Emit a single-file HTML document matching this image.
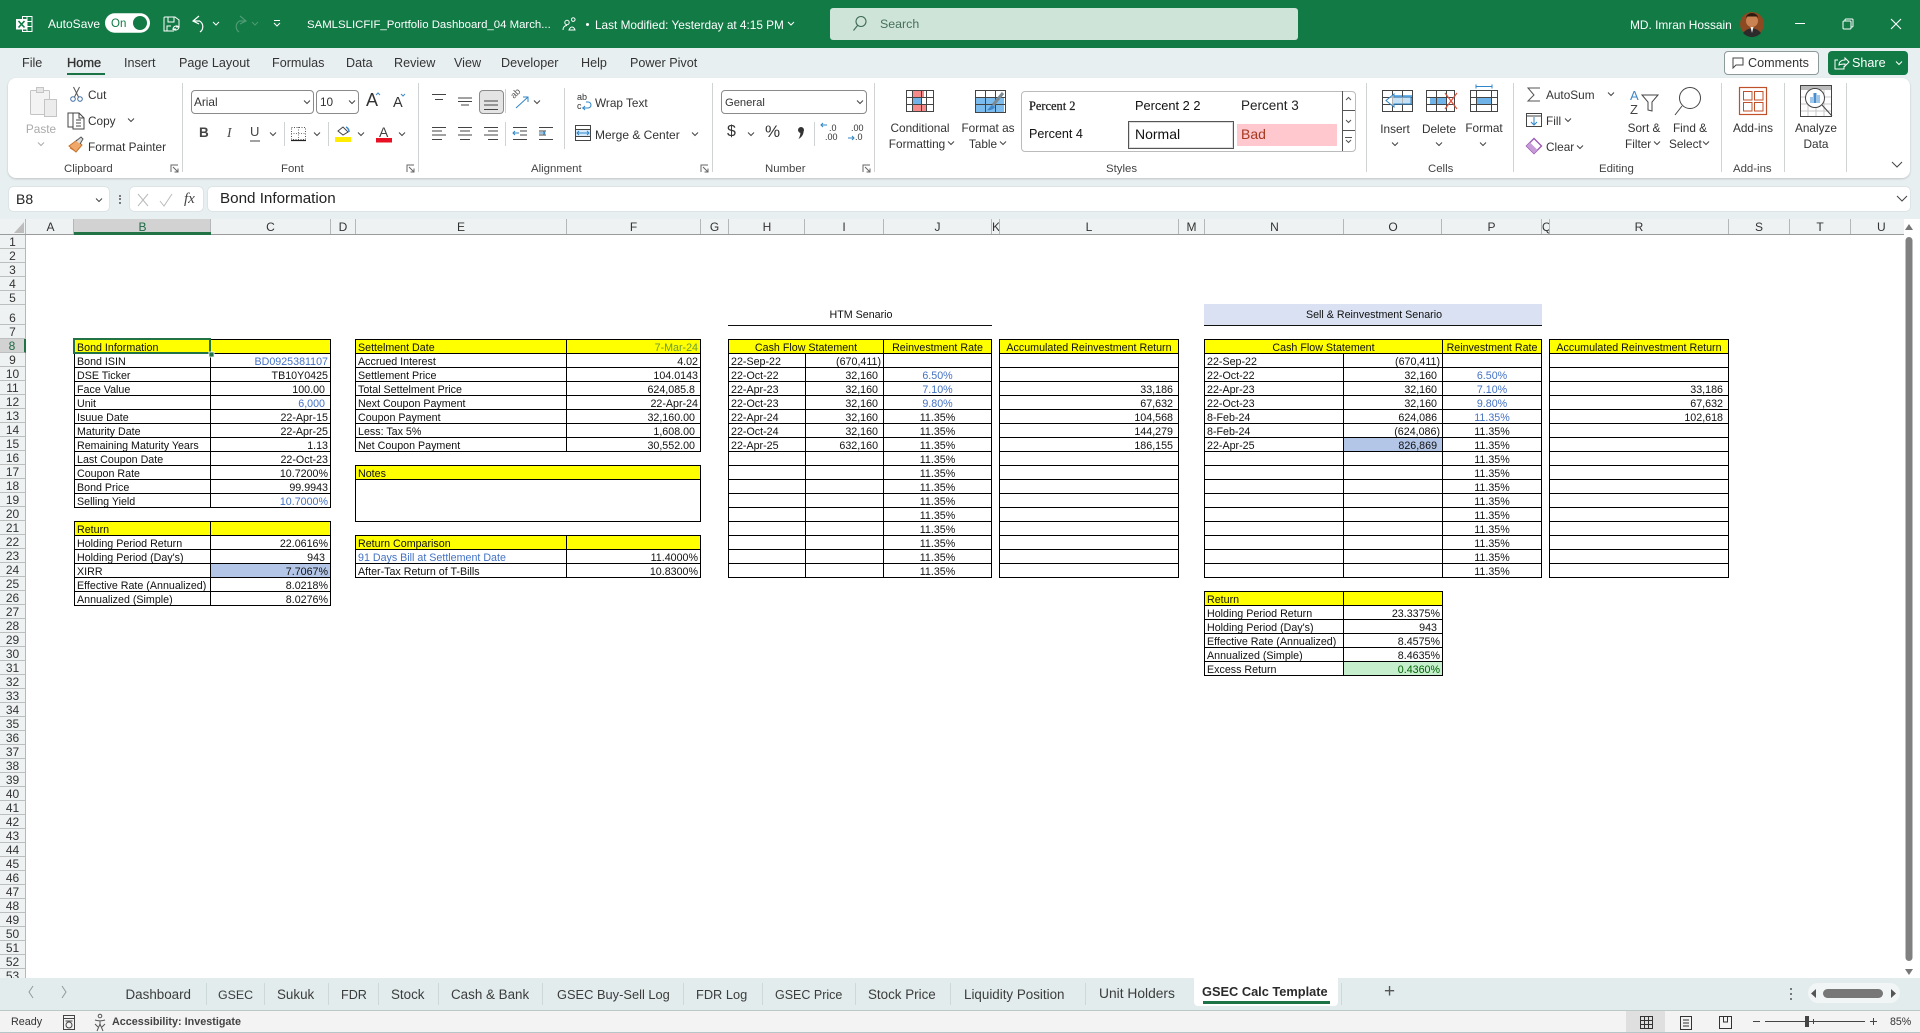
<!DOCTYPE html>
<html lang="en"><head><meta charset="utf-8"><title>Excel</title>
<style>
html,body{margin:0;padding:0;width:1920px;height:1033px;overflow:hidden;background:#e8eff1;font-family:"Liberation Sans",Arial,sans-serif;color:#262626}
.a{position:absolute}
.t{position:absolute;white-space:nowrap;line-height:16px;font-size:11.8px;color:#333}
.ctr{transform:translateX(-50%)}
.m{font-size:12.6px;top:55px;color:#333}
.l{top:161px;font-size:11.4px;color:#444}
.w{color:#fff}
.tab{position:absolute;top:986px;font-size:13.4px;line-height:18px;color:#3c3c3c;white-space:nowrap}
.sep{position:absolute;width:1px;background:#c9cfd1}
.ts{position:absolute;width:1px;top:983px;height:22px;background:#cdd8d8}
.ch{position:absolute;top:219px;height:16px;line-height:16px;text-align:center;font-size:12px;color:#333;background:#eff2f3;border-right:1px solid #b4b8b9;overflow:hidden;box-sizing:border-box}
#rh{position:absolute;left:0;top:235px;width:26px;height:743px;overflow:hidden;background:#eff2f3}
#rh div{height:14px;box-sizing:border-box;border-bottom:1px solid #bdbfbf;border-right:1px solid #b4b8b9;font-size:12px;line-height:14px;text-align:center;color:#333}
table{position:absolute;border-collapse:collapse;table-layout:fixed;font-size:10.7px;color:#111}
td{height:14px;padding:3px 2px 0;border:1px solid #000;line-height:10px;white-space:nowrap;overflow:hidden;box-sizing:border-box}
td.r{text-align:right}
td.p{text-align:right;padding-right:5px}
td.c{text-align:center}
.y{background:#ff0}
.b{color:#4472c4}
</style></head><body>

<div class="a" style="left:0;top:0;width:1920px;height:48px;background:#117a45"></div>
<div class="a" style="left:830px;top:8px;width:468px;height:32px;background:#cfe4d8;border-radius:3px"></div>
<div class="a" style="left:8px;top:78px;width:1902px;height:100px;background:#fff;border-radius:8px;box-shadow:0 1px 2px rgba(0,0,0,.18)"></div>
<div class="a" style="left:9px;top:187px;width:100px;height:24px;background:#fff;border-radius:4px;box-shadow:0 0 1px rgba(0,0,0,.3)"></div>
<div class="a" style="left:130px;top:187px;width:73px;height:24px;background:#fff;border-radius:4px;box-shadow:0 0 1px rgba(0,0,0,.3)"></div>
<div class="a" style="left:208px;top:187px;width:1702px;height:24px;background:#fff;border-radius:4px;box-shadow:0 0 1px rgba(0,0,0,.3)"></div>

<!-- sheet -->
<div class="a" style="left:0;top:219px;width:1920px;height:759px;background:#fff"></div>
<div class="a" style="left:0;top:219px;width:26px;height:16px;background:#eff2f3;border-right:1px solid #b4b8b9;box-sizing:border-box"></div>
<div class="ch" style="left:26px;width:48px;padding-left:2px">A</div>
<div class="ch" style="left:74px;width:137px;background:#d2d2d2;color:#1f6b45;padding-left:1px">B</div>
<div class="ch" style="left:211px;width:120px">C</div>
<div class="ch" style="left:331px;width:25px">D</div>
<div class="ch" style="left:356px;width:211px">E</div>
<div class="ch" style="left:567px;width:134px">F</div>
<div class="ch" style="left:701px;width:28px">G</div>
<div class="ch" style="left:729px;width:76px;padding-left:1px">H</div>
<div class="ch" style="left:805px;width:79px">I</div>
<div class="ch" style="left:884px;width:108px">J</div>
<div class="ch" style="left:992px;width:8px">K</div>
<div class="ch" style="left:1000px;width:179px">L</div>
<div class="ch" style="left:1179px;width:26px">M</div>
<div class="ch" style="left:1205px;width:139px;padding-left:1px">N</div>
<div class="ch" style="left:1344px;width:98px;padding-left:1px">O</div>
<div class="ch" style="left:1442px;width:100px">P</div>
<div class="ch" style="left:1542px;width:8px">Q</div>
<div class="ch" style="left:1550px;width:179px">R</div>
<div class="ch" style="left:1729px;width:61px">S</div>
<div class="ch" style="left:1790px;width:61px">T</div>
<div class="ch" style="left:1851px;width:53px;text-align:left;padding-left:26px;border-right:0">U</div>
<div class="a" style="left:0;top:234px;width:1904px;height:1px;background:#9a9a9a"></div>
<div class="a" style="left:74px;top:232px;width:137px;height:3px;background:#217346"></div>

<div id="rh">
<div>1</div><div>2</div><div>3</div><div>4</div><div>5</div>
<div style="height:20px;padding-top:6px">6</div>
<div>7</div><div style="background:#d2d2d2;color:#1f6b45;border-right:2px solid #217346">8</div><div>9</div><div>10</div><div>11</div><div>12</div><div>13</div><div>14</div><div>15</div><div>16</div><div>17</div><div>18</div><div>19</div><div>20</div><div>21</div><div>22</div><div>23</div><div>24</div><div>25</div><div>26</div><div>27</div><div>28</div><div>29</div><div>30</div><div>31</div><div>32</div><div>33</div><div>34</div><div>35</div><div>36</div><div>37</div><div>38</div><div>39</div><div>40</div><div>41</div><div>42</div><div>43</div><div>44</div><div>45</div><div>46</div><div>47</div><div>48</div><div>49</div><div>50</div><div>51</div><div>52</div><div>53</div>
</div>

<!-- T1 -->
<table style="left:74px;top:339px;width:256px"><col style="width:136px"><col style="width:120px">
<tr class="y"><td>Bond Information</td><td></td></tr>
<tr><td>Bond ISIN</td><td class="r b">BD0925381107</td></tr>
<tr><td>DSE Ticker</td><td class="r">TB10Y0425</td></tr>
<tr><td>Face Value</td><td class="p">100.00</td></tr>
<tr><td>Unit</td><td class="p b">6,000</td></tr>
<tr><td>Isuue Date</td><td class="r">22-Apr-15</td></tr>
<tr><td>Maturity Date</td><td class="r">22-Apr-25</td></tr>
<tr><td>Remaining Maturity Years</td><td class="r">1.13</td></tr>
<tr><td>Last Coupon Date</td><td class="r">22-Oct-23</td></tr>
<tr><td>Coupon Rate</td><td class="r">10.7200%</td></tr>
<tr><td>Bond Price</td><td class="r">99.9943</td></tr>
<tr><td>Selling Yield</td><td class="r b">10.7000%</td></tr>
</table>
<table style="left:74px;top:521px;width:256px"><col style="width:136px"><col style="width:120px">
<tr class="y"><td>Return</td><td></td></tr>
<tr><td>Holding Period Return</td><td class="r">22.0616%</td></tr>
<tr><td>Holding Period (Day's)</td><td class="p">943</td></tr>
<tr><td>XIRR</td><td class="r" style="background:#b4c6e7">7.7067%</td></tr>
<tr><td>Effective Rate (Annualized)</td><td class="r">8.0218%</td></tr>
<tr><td>Annualized (Simple)</td><td class="r">8.0276%</td></tr>
</table>

<!-- T2 -->
<table style="left:355px;top:339px;width:345px"><col style="width:211px"><col style="width:134px">
<tr class="y"><td>Settelment Date</td><td class="r" style="color:#6a9a3a">7-Mar-24</td></tr>
<tr><td>Accrued Interest</td><td class="r">4.02</td></tr>
<tr><td>Settlement Price</td><td class="r">104.0143</td></tr>
<tr><td>Total Settelment Price</td><td class="p">624,085.8</td></tr>
<tr><td>Next Coupon Payment</td><td class="r">22-Apr-24</td></tr>
<tr><td>Coupon Payment</td><td class="p">32,160.00</td></tr>
<tr><td>Less: Tax 5%</td><td class="p">1,608.00</td></tr>
<tr><td>Net Coupon Payment</td><td class="p">30,552.00</td></tr>
</table>
<table style="left:355px;top:465px;width:345px"><col style="width:345px">
<tr class="y"><td>Notes</td></tr>
<tr><td style="height:42px"></td></tr>
</table>
<table style="left:355px;top:535px;width:345px"><col style="width:211px"><col style="width:134px">
<tr class="y"><td>Return Comparison</td><td></td></tr>
<tr><td class="b">91 Days Bill at Settlement Date</td><td class="r">11.4000%</td></tr>
<tr><td>After-Tax Return of T-Bills</td><td class="r">10.8300%</td></tr>
</table>

<!-- T3 -->
<div class="t" style="left:861px;top:307px;font-size:10.7px;color:#111"><span class="ctr" style="display:inline-block">HTM Senario</span></div>
<div class="a" style="left:728px;top:325px;width:264px;height:1px;background:#111"></div>
<table style="left:728px;top:339px;width:263px"><col style="width:77px"><col style="width:78px"><col style="width:108px">
<tr class="y"><td class="c" colspan="2">Cash Flow Statement</td><td class="c">Reinvestment Rate</td></tr>
<tr><td>22-Sep-22</td><td class="r">(670,411)</td><td></td></tr>
<tr><td>22-Oct-22</td><td class="p">32,160</td><td class="c b">6.50%</td></tr>
<tr><td>22-Apr-23</td><td class="p">32,160</td><td class="c b">7.10%</td></tr>
<tr><td>22-Oct-23</td><td class="p">32,160</td><td class="c b">9.80%</td></tr>
<tr><td>22-Apr-24</td><td class="p">32,160</td><td class="c">11.35%</td></tr>
<tr><td>22-Oct-24</td><td class="p">32,160</td><td class="c">11.35%</td></tr>
<tr><td>22-Apr-25</td><td class="p">632,160</td><td class="c">11.35%</td></tr>
<tr><td></td><td></td><td class="c">11.35%</td></tr>
<tr><td></td><td></td><td class="c">11.35%</td></tr>
<tr><td></td><td></td><td class="c">11.35%</td></tr>
<tr><td></td><td></td><td class="c">11.35%</td></tr>
<tr><td></td><td></td><td class="c">11.35%</td></tr>
<tr><td></td><td></td><td class="c">11.35%</td></tr>
<tr><td></td><td></td><td class="c">11.35%</td></tr>
<tr><td></td><td></td><td class="c">11.35%</td></tr>
<tr><td></td><td></td><td class="c">11.35%</td></tr>
</table>
<table style="left:999px;top:339px;width:179px"><col style="width:179px">
<tr class="y"><td class="c">Accumulated Reinvestment Return</td></tr>
<tr><td></td></tr><tr><td></td></tr>
<tr><td class="p">33,186</td></tr>
<tr><td class="p">67,632</td></tr>
<tr><td class="p">104,568</td></tr>
<tr><td class="p">144,279</td></tr>
<tr><td class="p">186,155</td></tr>
<tr><td></td></tr><tr><td></td></tr><tr><td></td></tr><tr><td></td></tr><tr><td></td></tr><tr><td></td></tr><tr><td></td></tr><tr><td></td></tr><tr><td></td></tr>
</table>

<!-- T4 -->
<div class="a" style="left:1204px;top:304px;width:338px;height:21px;background:#d9e1f2"></div>
<div class="a" style="left:1204px;top:325px;width:338px;height:1px;background:#111"></div>
<div class="t" style="left:1374px;top:307px;font-size:10.7px;color:#111"><span class="ctr" style="display:inline-block">Sell &amp; Reinvestment Senario</span></div>
<table style="left:1204px;top:339px;width:337px"><col style="width:139px"><col style="width:99px"><col style="width:99px">
<tr class="y"><td class="c" colspan="2">Cash Flow Statement</td><td class="c">Reinvestment Rate</td></tr>
<tr><td>22-Sep-22</td><td class="r">(670,411)</td><td></td></tr>
<tr><td>22-Oct-22</td><td class="p">32,160</td><td class="c b">6.50%</td></tr>
<tr><td>22-Apr-23</td><td class="p">32,160</td><td class="c b">7.10%</td></tr>
<tr><td>22-Oct-23</td><td class="p">32,160</td><td class="c b">9.80%</td></tr>
<tr><td>8-Feb-24</td><td class="p">624,086</td><td class="c b">11.35%</td></tr>
<tr><td>8-Feb-24</td><td class="r">(624,086)</td><td class="c">11.35%</td></tr>
<tr><td>22-Apr-25</td><td class="p" style="background:#b4c6e7">826,869</td><td class="c">11.35%</td></tr>
<tr><td></td><td></td><td class="c">11.35%</td></tr>
<tr><td></td><td></td><td class="c">11.35%</td></tr>
<tr><td></td><td></td><td class="c">11.35%</td></tr>
<tr><td></td><td></td><td class="c">11.35%</td></tr>
<tr><td></td><td></td><td class="c">11.35%</td></tr>
<tr><td></td><td></td><td class="c">11.35%</td></tr>
<tr><td></td><td></td><td class="c">11.35%</td></tr>
<tr><td></td><td></td><td class="c">11.35%</td></tr>
<tr><td></td><td></td><td class="c">11.35%</td></tr>
</table>
<table style="left:1549px;top:339px;width:179px"><col style="width:179px">
<tr class="y"><td class="c">Accumulated Reinvestment Return</td></tr>
<tr><td></td></tr><tr><td></td></tr>
<tr><td class="p">33,186</td></tr>
<tr><td class="p">67,632</td></tr>
<tr><td class="p">102,618</td></tr>
<tr><td></td></tr><tr><td></td></tr><tr><td></td></tr><tr><td></td></tr><tr><td></td></tr><tr><td></td></tr><tr><td></td></tr><tr><td></td></tr><tr><td></td></tr><tr><td></td></tr><tr><td></td></tr>
</table>
<table style="left:1204px;top:591px;width:238px"><col style="width:139px"><col style="width:99px">
<tr class="y"><td>Return</td><td></td></tr>
<tr><td>Holding Period Return</td><td class="r">23.3375%</td></tr>
<tr><td>Holding Period (Day's)</td><td class="p">943</td></tr>
<tr><td>Effective Rate (Annualized)</td><td class="r">8.4575%</td></tr>
<tr><td>Annualized (Simple)</td><td class="r">8.4635%</td></tr>
<tr><td>Excess Return</td><td class="r" style="background:#c6efce;color:#006100">0.4360%</td></tr>
</table>

<!-- selection -->
<div class="a" style="left:73px;top:338px;width:138px;height:16px;border:2px solid #217346;box-sizing:border-box"></div>
<div class="a" style="left:208px;top:351px;width:5px;height:5px;background:#217346;border:1px solid #fff;box-sizing:content-box;transform:scale(.85)"></div>

<!-- tab + status -->
<div class="a" style="left:0;top:978px;width:1920px;height:32px;background:#e2ecec"></div>
<div class="a" style="left:0;top:1010px;width:1920px;height:1px;background:#bcc8c8"></div>
<div class="a" style="left:0;top:1011px;width:1920px;height:21px;background:#f4f3f3"></div>
<div class="a" style="left:0;top:1032px;width:1920px;height:1px;background:#b5c6c6"></div>
<div class="a" style="left:1626px;top:1011px;width:39px;height:21px;background:#dfdfdf"></div>
<div class="a" style="left:1194px;top:975px;width:144px;height:31px;background:#fff;border-radius:0 0 4px 4px"></div>
<div class="a" style="left:1203px;top:1001px;width:127px;height:2.5px;background:#1c7446"></div>
<div class="ts" style="left:206px"></div><div class="ts" style="left:264px"></div><div class="ts" style="left:328px"></div><div class="ts" style="left:378px"></div><div class="ts" style="left:438px"></div><div class="ts" style="left:542px"></div><div class="ts" style="left:683px"></div><div class="ts" style="left:762px"></div><div class="ts" style="left:855px"></div><div class="ts" style="left:950px"></div><div class="ts" style="left:1085px"></div><div class="ts" style="left:1341px"></div>

<div class="tab" style="left:125.500px">Dashboard</div>
<div class="tab" style="left:218px;font-size:12.400px">GSEC</div>
<div class="tab" style="left:277px">Sukuk</div>
<div class="tab" style="left:341px;font-size:12.600px">FDR</div>
<div class="tab" style="left:391px">Stock</div>
<div class="tab" style="left:451px">Cash &amp; Bank</div>
<div class="tab" style="left:557px;font-size:12.850px">GSEC Buy-Sell Log</div>
<div class="tab" style="left:696px;font-size:12.800px">FDR Log</div>
<div class="tab" style="left:775px;font-size:12.500px">GSEC Price</div>
<div class="tab" style="left:868px">Stock Price</div>
<div class="tab" style="left:964px">Liquidity Position</div>
<div class="tab" style="left:1099px;font-size:13.800px;top:985px">Unit Holders</div>
<div class="tab" style="left:1202px;top:983px;font-size:12.800px;color:#2a2a2a;font-weight:bold">GSEC Calc Template</div>
<div class="tab" style="left:1384px;top:983px;font-size:19px;color:#555">+</div>

<div class="t" style="left:11px;top:1014px;font-size:10.8px">Ready</div>
<div class="t" style="left:112px;top:1014px;font-size:10.8px;font-weight:bold;color:#444">Accessibility: Investigate</div>
<div class="t" style="left:1890px;top:1014px;font-size:10.6px">85%</div>

<!-- title bar text -->
<div class="t w" style="left:48px;top:16px;font-size:12px">AutoSave</div>
<div class="t w" style="left:307px;top:17px;font-size:11.400px">SAMLSLICFIF_Portfolio Dashboard_04 March...</div>
<div class="t w" style="left:595px;top:17px;font-size:11.8px">Last Modified: Yesterday at 4:15 PM</div>
<div class="t" style="left:880px;top:16px;font-size:12.4px;color:#46705c">Search</div>
<div class="t w" style="left:1630px;top:17px;font-size:11.9px">MD. Imran Hossain</div>

<!-- menu -->
<div class="t m" style="left:22px">File</div>
<div class="t m" style="left:67px;font-size:12.800px;-webkit-text-stroke:.35px #333">Home</div>
<div class="t m" style="left:124px">Insert</div>
<div class="t m" style="left:179px">Page Layout</div>
<div class="t m" style="left:272px">Formulas</div>
<div class="t m" style="left:346px">Data</div>
<div class="t m" style="left:394px">Review</div>
<div class="t m" style="left:454px">View</div>
<div class="t m" style="left:501px">Developer</div>
<div class="t m" style="left:581px">Help</div>
<div class="t m" style="left:630px">Power Pivot</div>
<div class="a" style="left:67px;top:73px;width:38px;height:2px;background:#1c7446"></div>

<div class="a" style="left:1724px;top:51px;width:95px;height:24px;background:#fff;border:1px solid #8e9a9a;border-radius:4px;box-sizing:border-box"></div>
<div class="t" style="left:1748px;top:55px;font-size:12.600px">Comments</div>
<div class="a" style="left:1828px;top:51px;width:80px;height:24px;background:#117a45;border-radius:4px"></div>
<div class="t w" style="left:1852px;top:55px;font-size:12.6px">Share</div>

<!-- ribbon text -->
<div class="t" style="left:88px;top:87px">Cut</div>
<div class="t" style="left:88px;top:113px">Copy</div>
<div class="t" style="left:88px;top:139px">Format Painter</div>
<div class="t ctr" style="left:41px;top:121px;color:#aaa">Paste</div>
<div class="t l" style="left:64px">Clipboard</div>
<div class="t l" style="left:281px">Font</div>
<div class="t l" style="left:531px">Alignment</div>
<div class="t l" style="left:765px">Number</div>
<div class="t l" style="left:1106px">Styles</div>
<div class="t l" style="left:1428px">Cells</div>
<div class="t l" style="left:1599px">Editing</div>
<div class="t l" style="left:1733px">Add-ins</div>

<div class="a" style="left:191px;top:90px;width:123px;height:24px;border:1px solid #8a8a8a;border-radius:4px;box-sizing:border-box"></div>
<div class="a" style="left:316px;top:90px;width:43px;height:24px;border:1px solid #8a8a8a;border-radius:4px;box-sizing:border-box"></div>
<div class="t" style="left:194px;top:94px;font-size:11.8px">Arial</div>
<div class="t" style="left:320px;top:94px;font-size:11.8px">10</div>
<div class="t" style="left:366px;top:92px;font-size:18px">A</div>
<div class="t" style="left:393px;top:95px;font-size:14.500px">A</div>
<div class="t" style="left:199px;top:125px;font-size:13.5px;font-weight:bold;color:#444">B</div>
<div class="t" style="left:227px;top:125px;font-size:13.5px;font-style:italic;font-family:'Liberation Serif',serif;color:#444">I</div>
<div class="t" style="left:250px;top:124px;font-size:13px;color:#444">U</div>
<div class="t" style="left:379px;top:124px;font-size:14px;color:#444">A</div>

<div class="a" style="left:479px;top:90px;width:25px;height:24px;background:#e4e4e4;border:1px solid #8a8a8a;border-radius:4px;box-sizing:border-box"></div>
<div class="t" style="left:595px;top:95px">Wrap Text</div>
<div class="t" style="left:595px;top:127px;font-size:12px">Merge &amp; Center</div>
<div class="t" style="left:577px;top:93px;font-size:9px;line-height:9px;color:#333">ab<br>c</div>

<div class="a" style="left:721px;top:90px;width:146px;height:24px;border:1px solid #8a8a8a;border-radius:4px;box-sizing:border-box"></div>
<div class="t" style="left:725px;top:95px;font-size:11.2px">General</div>
<div class="t" style="left:727px;top:124px;font-size:16px">$</div>
<div class="t" style="left:765px;top:124px;font-size:17px">%</div>
<div class="t" style="left:829px;top:124px;font-size:9px;line-height:9px;color:#333">.0</div>
<div class="t" style="left:825px;top:133px;font-size:9px;line-height:9px;color:#333">.00</div>
<div class="t" style="left:851px;top:124px;font-size:9px;line-height:9px;color:#333">.00</div>
<div class="t" style="left:855px;top:133px;font-size:9px;line-height:9px;color:#333">.0</div>

<div class="t ctr" style="left:920px;top:120px">Conditional</div>
<div class="t ctr" style="left:917px;top:136px">Formatting</div>
<div class="t ctr" style="left:988px;top:120px">Format as</div>
<div class="t ctr" style="left:983px;top:136px">Table</div>

<div class="a" style="left:1020.5px;top:90.5px;width:335px;height:61px;border:1px solid #bbb;border-radius:4px;box-sizing:border-box"></div>
<div class="t" style="left:1029px;top:98px;font-family:'Liberation Serif',serif;font-size:12.400px;-webkit-text-stroke:.25px #222;color:#222">Percent 2</div>
<div class="t" style="left:1135px;top:98px;font-size:12.800px;color:#111">Percent 2 2</div>
<div class="t" style="left:1241px;top:98px;font-size:13.500px;color:#222">Percent 3</div>
<div class="t" style="left:1029px;top:126px;font-size:12.600px;color:#111">Percent 4</div>
<div class="a" style="left:1128px;top:121px;width:106px;height:28px;background:#fff;border:1px solid #555;box-shadow:inset 0 0 0 1px #ddd;box-sizing:border-box"></div>
<div class="t" style="left:1135px;top:126px;font-size:14px;color:#111">Normal</div>
<div class="a" style="left:1237px;top:124px;width:100px;height:22px;background:#ffc7ce"></div>
<div class="t" style="left:1241px;top:126px;font-size:14px;color:#a6391f">Bad</div>

<div class="t ctr" style="left:1395px;top:121px">Insert</div>
<div class="t ctr" style="left:1439px;top:121px">Delete</div>
<div class="t ctr" style="left:1484px;top:120px">Format</div>
<div class="t" style="left:1546px;top:87px">AutoSum</div>
<div class="t" style="left:1546px;top:113px">Fill</div>
<div class="t" style="left:1546px;top:139px">Clear</div>
<div class="t ctr" style="left:1644px;top:120px">Sort &amp;</div>
<div class="t" style="left:1625px;top:136px">Filter</div>
<div class="t ctr" style="left:1690px;top:120px">Find &amp;</div>
<div class="t" style="left:1669px;top:136px">Select</div>
<div class="t ctr" style="left:1753px;top:120px">Add-ins</div>
<div class="t ctr" style="left:1816px;top:120px">Analyze</div>
<div class="t ctr" style="left:1816px;top:136px">Data</div>

<!-- formula bar text -->
<div class="t" style="left:16px;top:191px;font-size:14px;color:#222">B8</div>
<div class="t" style="left:220px;top:191px;font-size:15.200px;color:#222">Bond Information</div>
<div class="t" style="left:184px;top:191px;font-size:15px;font-style:italic;font-family:'Liberation Serif',serif;color:#444">fx</div>

<!-- icons overlay -->
<svg class="a" style="left:0;top:0;pointer-events:none" width="1920" height="1033" viewBox="0 0 1920 1033" fill="none">
<defs>
<path id="c" d="M-3-1.5l3 3 3-3" stroke="#444" stroke-width="1"/>
<path id="cw" d="M-3-1.5l3 3 3-3" stroke="#fff" stroke-width="1"/>
<g id="lau" stroke="#666" stroke-width="1"><path d="M0 7V0h7"/><path d="M2 2l5 5M3.5 7H7V3.5"/></g>
</defs>
<!-- excel logo -->
<g stroke="#fff" stroke-width="1"><rect x="22.5" y="16.5" width="9.5" height="15"/><path d="M22 21.5h10M22 26.5h10M27 16.5v15"/></g>
<rect x="16" y="19" width="11" height="10.5" fill="#fff"/><path d="M18.5 21l6 6.5M24.5 21l-6 6.5" stroke="#117a45" stroke-width="1.6"/>
<!-- toggle -->
<rect x="105" y="13.3" width="45" height="19.4" rx="9.7" fill="#fff"/><circle cx="140" cy="23" r="7" fill="#117a45"/>
<!-- save/undo/redo -->
<g stroke="#fff" stroke-width="1"><path d="M165 17h10l4 3v5M165 17a1 1 0 0 0-1 1v13h8"/><path d="M168 17v5h6v-5M167 31v-5h4"/><path d="M173 29a3.500 3.500 0 0 1 6-2M179 27a3.500 3.500 0 0 1-6 2M179 24v3h-3M173 32v-3h3"/></g>
<path d="M199 16l-6 5 6 3M193.500 21h6a6.500 6.500 0 0 1 .5 11" stroke="#fff" stroke-width="1.2"/>
<use href="#cw" x="216" y="23.500"/>
<path d="M240 16l6 5-6 3M245.500 21h-6a6.500 6.500 0 0 0-.5 11" stroke="#4f9b74" stroke-width="1.200"/>
<path d="M252 22l3 3 3-3" stroke="#4f9b74"/>
<path d="M274 20.500h6M274 23l3 3 3-3" stroke="#fff"/>
<!-- person + dot -->
<g stroke="#fff" stroke-width="1"><circle cx="567" cy="22.500" r="2.200"/><path d="M563 30c0-2.500 1.500-4.500 4-4.500M571.500 19.500a1.800 1.800 0 1 1 0 .1M569 30c.8-2 2-3 3-3s2.500 1 3 3z"/></g>
<circle cx="587.500" cy="24.500" r="1.500" fill="#fff"/>
<use href="#cw" x="791" y="23.500"/>
<!-- search icon -->
<g stroke="#3d6a54" stroke-width="1.100"><circle cx="861" cy="21.500" r="5"/><path d="M857.500 25.500l-4 5"/></g>
<!-- avatar -->
<circle cx="1752" cy="24" r="12" fill="#8d4a22"/><circle cx="1752" cy="21" r="6" fill="#c98352"/><path d="M1746 18a6 5 0 0 1 12 0l-1-1.500h-10z" fill="#2b1a10"/><path d="M1743 33a11 11 0 0 1 18 0a12 12 0 0 1-18 0z" fill="#2e2a2b"/><path d="M1750.500 27h3l-1.500 6z" fill="#eee"/>
<!-- window -->
<path d="M1795 23.500h10" stroke="#fff"/><g stroke="#fff"><rect x="1843" y="21" width="8" height="8" rx="1"/><path d="M1845 21v-1a1 1 0 0 1 1-1h6a1 1 0 0 1 1 1v6a1 1 0 0 1-1 1h-1"/></g>
<path d="M1891 19l10 10M1901 19l-10 10" stroke="#fff" stroke-width="1.100"/>
<!-- comments/share -->
<path d="M1733 58h10v7h-7l-3 3z" stroke="#444"/>
<g stroke="#fff"><path d="M1838 60h-3v9h9v-3"/><path d="M1839 65c0-3 2-5 6-5v-2l4 4-4 4v-2c-2 0-4 0-6 1z"/></g>
<use href="#cw" x="1899" y="63"/>
<!-- paste -->
<g stroke="#c4c4c4" fill="#f3f3f3"><rect x="30.500" y="90.500" width="19" height="24" rx="1"/><rect x="44.500" y="99.500" width="12" height="17" fill="#ececec"/><rect x="36.500" y="87.500" width="7" height="5" fill="#e6e6e6"/></g>
<use href="#c" x="41" y="144" opacity=".45"/>
<!-- cut -->
<g stroke="#3f6fa6" stroke-width="1"><circle cx="73" cy="99" r="2.300"/><circle cx="80" cy="99" r="2.300"/></g><path d="M74.500 97l5-10M78.500 97l-5-10" stroke="#555"/>
<!-- copy -->
<g stroke="#444"><path d="M73 127h-5v-14h5"/><path d="M73 113h6l5 5v11H73z" fill="#fff"/><path d="M76 120h5M76 123h5M76 126h5M79 113v5h5"/></g>
<use href="#c" x="131" y="120"/>
<!-- format painter -->
<path d="M69 146l8-6 5 5-6 7z" fill="#efa86a" stroke="#c9742d"/><path d="M76 141l5-4 2 2-3 5" stroke="#555" fill="#ddd"/><path d="M70 148l5 3" stroke="#c9742d"/>
<use href="#lau" x="171" y="165"/><use href="#lau" x="407" y="165"/><use href="#lau" x="701" y="165"/><use href="#lau" x="863" y="165"/>
<!-- separators -->
<g stroke="#cfd3d4"><path d="M182.500 83v89M418.500 83v89M712.500 83v89M874.500 83v89M1366.500 83v89M1513.500 83v89M1721.500 83v89M1784.500 83v89M1846.500 83v89M284.500 122v24M328.500 122v24M505.500 89v24M505.500 122v24M564.500 88v61M814.500 122v24"/></g>
<!-- font chevrons -->
<use href="#c" x="307" y="102"/><use href="#c" x="352" y="102"/><use href="#c" x="273" y="134"/><use href="#c" x="317" y="134"/><use href="#c" x="361" y="134"/><use href="#c" x="402" y="134"/>
<path d="M376 95l2-2 2 2" stroke="#3f87c7"/><path d="M401 94l2 2 2-2" stroke="#3f87c7"/>
<path d="M250 141h10" stroke="#444"/>
<!-- borders -->
<rect x="291.500" y="127.500" width="14" height="12" stroke="#555" stroke-dasharray="1 1.500"/><path d="M298.500 127v12M291 133.500h15" stroke="#777" stroke-dasharray="1 1.500"/><path d="M291 140.500h15" stroke="#222" stroke-width="1.200"/>
<!-- fill colour -->
<path d="M338 131l5-4 5 5-5 3z" stroke="#444"/><path d="M346 127c2 1 3 3 3 5" stroke="#3f87c7" stroke-width="1.500"/><rect x="335" y="137" width="16" height="5" fill="#ffec00"/>
<rect x="376" y="138" width="16" height="4.500" fill="#e81123"/>
<!-- alignment -->
<g stroke="#444"><path d="M432 94.500h14M435 99.500h8"/><path d="M458 101.500h14M461 105h8M458 98h14" stroke-width=".9"/><path d="M484 101h14M484 105h14M484 109.500h14"/>
<path d="M432 127.500h14M432 131h10M432 135h14M432 139.500h10M458 127.500h14M460 131h10M458 135h14M460 139.500h10M484 127.500h14M488 131h10M484 135h14M488 139.500h10"/></g>
<g stroke="#444"><path d="M513 127.500h14M513 139.500h14M520 131h7M520 135h7M539 127.500h14M539 139.500h14M539 131h7M539 135h7"/></g>
<path d="M519 133h-6m2-2l-2 2 2 2M539 133h6m-2-2l2 2-2 2" stroke="#2f86c8"/>
<!-- orientation -->
<text x="514" y="99" font-family="Liberation Sans" font-size="9" fill="#555" transform="rotate(-45 514 99)">ab</text><path d="M516 108l12-11m-5 0h5v5" stroke="#2f86c8"/><use href="#c" x="537" y="102"/>
<!-- wrap -->
<path d="M582 108h6a3 3 0 0 0 0-6h-2m-3 6l2-2m-2 2l2 2" stroke="#2f86c8"/>
<!-- merge -->
<rect x="575.500" y="125.500" width="15" height="15" stroke="#444"/><rect x="576" y="129" width="14" height="8" fill="#d7eafb"/><path d="M576 129.500h14M576 136.500h14" stroke="#444"/><path d="M577 133h12m-10-2l-2 2 2 2m8-4l2 2-2 2" stroke="#2f86c8"/>
<use href="#c" x="695" y="134"/><use href="#c" x="860" y="102"/><use href="#c" x="751" y="134"/>
<!-- comma style -->
<circle cx="801" cy="130" r="3" fill="#333"/><path d="M803.500 130c.5 4-1.500 7-5 9 1.500-2.500 2-5 2-8z" fill="#333"/>
<!-- decimals -->
<path d="M827 125h-6m2-2l-2 2 2 2M848 138h6m-2-2l2 2-2 2" stroke="#2f86c8"/>
<!-- conditional formatting -->
<g><rect x="906" y="90" width="28" height="22" fill="#fff"/><rect x="912" y="90.500" width="12" height="7" fill="#f58a8a"/><rect x="912" y="97.500" width="9" height="7" fill="#6fb3e8"/><rect x="912" y="104.500" width="14" height="7" fill="#f58a8a"/><g stroke="#444"><rect x="906.500" y="90.500" width="27" height="21"/><path d="M906 97.500h28M906 104.500h28M912.500 90v22M921.500 90v22M926.500 90v22"/></g></g>
<use href="#c" x="951" y="143"/>
<!-- format as table -->
<rect x="975" y="97" width="29" height="15" fill="#7cbbee"/><rect x="975.500" y="90.500" width="30" height="22" stroke="#444"/><path d="M975 97.500h30M975 104.500h30M985.500 90v22M995.500 90v22" stroke="#444"/><path d="M1003 93l-10 12" stroke="#7b8a93" stroke-width="3"/><path d="M992 105c-2 1-3 4-5 5 3 1 7-1 8-3z" fill="#3f87c7"/>
<use href="#c" x="1003" y="143"/>
<!-- gallery buttons -->
<g stroke="#555"><path d="M1342.500 91v60M1342 110.500h13M1342 130.500h13"/><path d="M1346 100l2.500-2.500 2.500 2.500"/><path d="M1346 120l2.500 2.500 2.500-2.500"/><path d="M1345 137.500h7M1346 140l2.500 2.500 2.500-2.500"/></g>
<!-- insert -->
<rect x="1393" y="95" width="19" height="9" fill="#6fb3e8"/><g stroke="#444"><rect x="1382.500" y="90.500" width="30" height="21"/><path d="M1382 97.500h31M1382 104.500h31M1392.500 90v22M1402.500 90v22"/></g><path d="M1394 97h17v7h-17v3l-8-6.500 8-6.500z" stroke="#2f86c8" fill="#fff" fill-opacity=".6"/>
<!-- delete -->
<rect x="1430" y="97" width="16" height="8" fill="#6fb3e8"/><g stroke="#444"><rect x="1426.500" y="90.500" width="28" height="21"/><path d="M1426 97.500h29M1426 104.500h29M1436.500 90v22M1446.500 90v22"/></g><path d="M1445 93l12 16M1457 93l-12 16" stroke="#e04f3c" stroke-width="1.200"/>
<!-- format -->
<rect x="1476" y="97" width="16" height="8" fill="#6fb3e8"/><g stroke="#444"><rect x="1470.500" y="90.500" width="27" height="21"/><path d="M1470 97.500h28M1470 104.500h28M1476.500 90v22M1491.500 90v22"/></g><path d="M1476 86.500h16M1476 84.500v4M1492 84.500v4" stroke="#2f86c8"/>
<use href="#c" x="1395" y="144"/><use href="#c" x="1439" y="144"/><use href="#c" x="1483" y="144"/>
<!-- sigma -->
<path d="M1540 88h-12l6 7-6 6h12" stroke="#555"/><use href="#c" x="1611" y="94"/>
<!-- fill -->
<rect x="1526.500" y="113.500" width="15" height="13" stroke="#444"/><path d="M1526 116h15" stroke="#444"/><path d="M1534 117v8m-3-3l3 3 3-3" stroke="#2f86c8"/><use href="#c" x="1568" y="120"/>
<!-- clear -->
<path d="M1534 138.500l7.500 7.500-7.500 7.500-7.500-7.500z" stroke="#9b59b6" stroke-width="1.400" fill="#fff"/><path d="M1526.500 146l3.500-3.500 7.500 7.500-3.500 3.500z" fill="#c89bd9"/><use href="#c" x="1580" y="147"/>
<!-- sort filter -->
<text x="1630" y="100" font-family="Liberation Sans" font-size="13" fill="#3f87c7">A</text><text x="1630" y="114" font-family="Liberation Sans" font-size="13" fill="#444">Z</text>
<path d="M1642 95h16l-6 7v9l-4-1v-8z" stroke="#444"/><use href="#c" x="1657" y="143"/>
<!-- find -->
<circle cx="1690" cy="98" r="10.500" stroke="#444"/><path d="M1682 106l-7 9" stroke="#444"/><use href="#c" x="1706" y="143"/>
<!-- add-ins -->
<rect x="1739.500" y="87.500" width="27" height="27" stroke="#c0502a" stroke-width="1.200"/><rect x="1743.500" y="91.500" width="8.500" height="8.500" stroke="#c0502a"/><rect x="1754.500" y="91.500" width="8.500" height="8.500" stroke="#c0502a"/><rect x="1743.500" y="102.500" width="8.500" height="8.500" stroke="#c0502a"/><rect x="1754.500" y="102.500" width="8.500" height="8.500" stroke="#c0502a"/>
<!-- analyze -->
<rect x="1800.500" y="85.500" width="31" height="31" stroke="#444" fill="#fff"/><rect x="1801" y="86" width="30" height="4" fill="#bbb"/><path d="M1801 97h30M1801 104h30M1801 111h30M1808 90v26M1816 90v26M1824 90v26" stroke="#c8c8c8"/><circle cx="1815" cy="98" r="9.500" stroke="#444" fill="#fff"/><rect x="1810" y="97" width="3" height="6" fill="#9ec7ea"/><rect x="1813.500" y="93" width="3" height="10" fill="#4a8fcc"/><rect x="1817" y="95" width="3" height="8" fill="#9ec7ea"/><path d="M1822 105l10 11" stroke="#444"/>
<path d="M1892 162l5 5 5-5" stroke="#444"/>
<!-- formula bar -->
<use href="#c" x="99" y="200"/><g fill="#555"><circle cx="120" cy="196" r="1"/><circle cx="120" cy="199" r="1"/><circle cx="120" cy="203" r="1"/></g>
<path d="M138 194l10 12M148 194l-10 12" stroke="#bbb"/><path d="M160 201l4 5 8-12" stroke="#bbb"/>
<path d="M1897 196l5 5 5-5" stroke="#444"/>
<path d="M24 222v11H14z" fill="#bdbdbd"/>
<!-- vertical scrollbar -->
<path d="M1909 224l4 6h-8z" fill="#777"/><rect x="1905.500" y="237" width="7" height="724" rx="3.500" fill="#808080"/>
<path d="M1909 975l-4-6h8z" fill="#777"/>
<!-- tab nav -->
<path d="M33 986l-4 6 4 6" stroke="#8f9b9b"/><path d="M62 986l4 6-4 6" stroke="#8f9b9b"/>
<!-- h scroll -->
<g fill="#555"><circle cx="1791" cy="989" r="1"/><circle cx="1791" cy="994" r="1"/><circle cx="1791" cy="999" r="1"/></g>
<rect x="1808" y="983" width="92" height="20" rx="10" fill="#f1f5f5"/><rect x="1823" y="989" width="60" height="9" rx="4.500" fill="#777"/><path d="M1816 989v9l-5-4.500zM1891 989v9l5-4.500z" fill="#555"/>
<!-- status -->
<g stroke="#444"><rect x="63.500" y="1015.500" width="11" height="14"/><path d="M63 1018.500h12M65.500 1021h7"/><circle cx="69" cy="1025" r="3"/></g>
<g stroke="#555"><circle cx="100" cy="1016" r="1.800"/><path d="M95 1020c3 1 7 1 10 0M100 1021v3M97 1031l3-7 3 7M95 1024l3 3M105 1024l-3 3"/></g>
<g stroke="#333"><rect x="1640.500" y="1016.500" width="12" height="12"/><path d="M1640 1020.500h13M1640 1024.500h13M1644.500 1016v13M1648.500 1016v13"/></g>
<g stroke="#333"><rect x="1680.500" y="1016.500" width="11" height="13"/><path d="M1683 1020h6M1683 1023h6M1683 1026h6"/></g>
<g stroke="#333"><rect x="1719.500" y="1016.500" width="12" height="12"/><path d="M1723.500 1016v6h4v-6"/></g>
<path d="M1753 1021.500h7M1765 1021.500h100M1813.500 1019v5M1870 1021.500h7M1873.500 1018v7" stroke="#444"/>
<rect x="1805" y="1016" width="4" height="11" fill="#444"/>
</svg>
<div class="t" style="left:111px;top:16px;font-size:11.5px;color:#117a45">On</div>
</body></html>
